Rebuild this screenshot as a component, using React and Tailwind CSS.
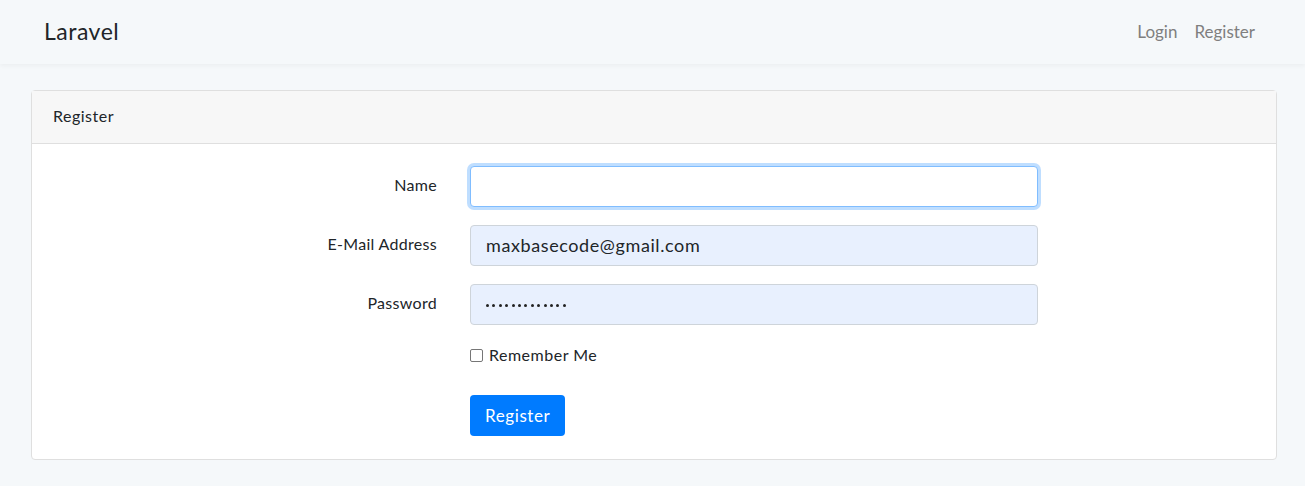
export default function App() {
  const dots = Array.from({ length: 13 });
  return (
    <div className="min-h-[486px] bg-[#f5f8fa] text-[#212529]" style={{ fontFamily: '"Lato", "Liberation Sans", sans-serif' }}>
      <nav className="h-[64px] bg-[#f5f8fa] shadow-[0_2px_4px_rgba(0,0,0,0.04)] flex items-center justify-between pl-[44px] pr-[50px]">
        <span className="text-[23px] tracking-[0.5px] text-[#212529] -mt-[2px]">Laravel</span>
        <div className="flex gap-[17px] text-[17px] text-[#7f7f7f] -mt-[1px]">
          <span>Login</span>
          <span>Register</span>
        </div>
      </nav>
      <main className="pt-[26px] pl-[31px] pr-[28px] pb-[26px]">
        <div className="bg-white border border-[#dfdfdf] rounded-[4px]">
          <div className="h-[53px] bg-[#f7f7f7] border-b border-[#dfdfdf] flex items-center pl-[21px] text-[16px] tracking-[0.5px]">
            <span className="-mt-[2px]">Register</span>
          </div>
          <div className="pt-[22px] pb-[23px]">
            {[
              { label: "Name", value: "", focus: true },
              { label: "E-Mail Address", value: "maxbasecode@gmail.com" },
              { label: "Password", value: "", pw: true },
            ].map((r) => (
              <div key={r.label} className="flex items-center mb-[18px]">
                <div className="w-[422px] pr-[17px] text-right text-[16px] tracking-[0.3px] -mt-[4px]">{r.label}</div>
                <div className="pl-[16px]">
                  <div
                    className={
                      "w-[568px] h-[41px] rounded-[4px] flex items-center px-[15px] text-[18px] tracking-[0.6px] " +
                      (r.focus
                        ? "bg-white border border-[#80bdff] shadow-[0_0_0_3px_rgba(0,123,255,0.25)]"
                        : "bg-[#e8f0fe] border border-[#ced4da]")
                    }
                  >
                    {r.pw ? (
                      <span className="flex gap-[3.4px] pt-[2px]">
                        {dots.map((_, i) => (
                          <span key={i} className="w-[3px] h-[3px] rounded-full bg-[#222]" />
                        ))}
                      </span>
                    ) : (
                      r.value
                    )}
                  </div>
                </div>
              </div>
            ))}
            <div className="flex mb-[28px]">
              <div className="w-[422px]" />
              <div className="pl-[16px] flex items-center gap-[6px] text-[16px] tracking-[0.5px]">
                <span className="w-[13px] h-[13px] border border-[#767676] rounded-[2px] bg-white" />
                <span>Remember Me</span>
              </div>
            </div>
            <div className="flex">
              <div className="w-[422px]" />
              <div className="pl-[16px]">
                <button className="h-[41px] px-[15px] bg-[#007bff] text-white text-[17px] tracking-[0.6px] rounded-[4px]">Register</button>
              </div>
            </div>
          </div>
        </div>
      </main>
    </div>
  );
}
